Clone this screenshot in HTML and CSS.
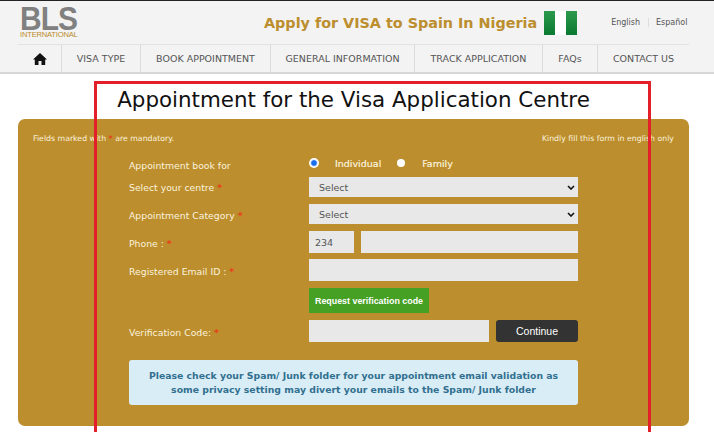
FILE: index.html

```html
<!DOCTYPE html>
<html>
<head>
	<meta charset="UTF-8">
	<title>Appointment for the Visa Application Centre</title>
	<link rel="stylesheet" href="styles.css">
</head>
<body>
	<div class="top">
		<div class="wrap head">
			<div class="logo">
				<div class="logo-name">BLS</div>
				<div class="logo-sub">INTERNATIONAL</div>
			</div>
			<div class="site-title">Apply for VISA to Spain In Nigeria</div>
			<div class="flag"><span></span></div>
			<div class="lang">
				<a class="lang-first">English</a>
				<a>Español</a>
			</div>
		</div>
		<div class="wrap">
			<ul class="nav">
				<li class="nav-home">
					<svg width="14" height="12" viewBox="0 0 14 12"><path d="M7 0 L14 6.4 L12.2 6.4 L12.2 12 L8.5 12 L8.5 8 L5.5 8 L5.5 12 L1.8 12 L1.8 6.4 L0 6.4 Z" fill="#111"/></svg>
				</li>
				<li class="w-visa">VISA TYPE</li>
				<li class="w-book">BOOK APPOINTMENT</li>
				<li class="w-info">GENERAL INFORMATION</li>
				<li class="w-track">TRACK APPLICATION</li>
				<li class="w-faq">FAQs</li>
				<li class="w-contact">CONTACT US</li>
			</ul>
		</div>
	</div>

	<h1 class="title">Appointment for the Visa Application Centre</h1>

	<div class="panel">
		<div class="notes">
			<span>Fields marked with <b class="req">*</b> are mandatory.</span>
			<span>Kindly fill this form in english only</span>
		</div>
		<form class="form">
			<div class="row row-radio">
				<label class="lbl">Appointment book for</label>
				<div class="radios">
					<span class="radio on"></span><span class="radio-text r-ind">Individual</span>
					<span class="radio"></span><span class="radio-text">Family</span>
				</div>
			</div>
			<div class="row row-sel">
				<label class="lbl">Select your centre <b class="req">*</b></label>
				<select class="field"><option>Select</option></select>
			</div>
			<div class="row row-sel">
				<label class="lbl">Appointment Category <b class="req">*</b></label>
				<select class="field"><option>Select</option></select>
			</div>
			<div class="row row-input">
				<label class="lbl">Phone : <b class="req">*</b></label>
				<div class="pair">
					<input class="field code" value="234">
					<input class="field">
				</div>
			</div>
			<div class="row row-input">
				<label class="lbl">Registered Email ID : <b class="req">*</b></label>
				<input class="field">
			</div>
			<div class="row row-btn">
				<span class="lbl"></span>
				<div class="ctrl"><button type="button" class="btn-green">Request verification code</button></div>
			</div>
			<div class="row row-input">
				<label class="lbl">Verification Code: <b class="req">*</b></label>
				<div class="pair">
					<input class="field">
					<button type="button" class="btn-dark">Continue</button>
				</div>
			</div>
			<div class="alert">Please check your Spam/ Junk folder for your appointment email validation as some privacy setting may divert your emails to the Spam/ Junk folder</div>
		</form>
	</div>

	<div class="marker"></div>
</body>
</html>
```

FILE: styles.css

```css
html, body {
	height: 432px;
	overflow: hidden;
}
body {
	margin: 0;
	background: #fff;
	font-family: "DejaVu Sans", Verdana, sans-serif;
	color: #333;
	position: relative;
}

/* header */
.top {
	background: #f3f3f3;
	border-top: 1px solid #222;
	border-bottom: 2px solid #d6d6d6;
	height: 71px;
}
.wrap {
	margin: 0 18px;
	width: 671px;
}
.head {
	display: flex;
	align-items: center;
	height: 43px;
	border-bottom: 1px solid #e2e2e2;
}
.logo {
	width: 246px;
	padding-left: 2px;
	box-sizing: border-box;
}
.logo-name {
	font-family: "Liberation Sans", sans-serif;
	font-weight: bold;
	font-size: 34px;
	line-height: 25px;
	color: #808080;
	letter-spacing: -1px;
	transform: scaleX(0.88);
	transform-origin: left;
}
.logo-sub {
	font-family: "Liberation Sans", sans-serif;
	font-size: 7.6px;
	line-height: 8px;
	color: #bb8c2c;
	letter-spacing: -0.2px;
}
.site-title {
	font-size: 14.35px;
	font-weight: bold;
	color: #bc8e2d;
	white-space: nowrap;
}
.flag {
	width: 33px;
	height: 24px;
	margin-left: 7px;
	background: linear-gradient(#2c9a4d, #0a7a32);
	display: flex;
	justify-content: center;
}
.flag span {
	width: 11px;
	background: #fff;
}
.lang {
	margin-left: 34px;
	font-size: 8px;
	color: #555;
	display: flex;
}
.lang-first {
	border-right: 1px solid #ddd;
	padding-right: 8px;
	margin-right: 7px;
}

.nav {
	list-style: none;
	margin: 0;
	padding: 0;
	display: flex;
	height: 27px;
	font-size: 9.5px;
	color: #555;
}
.nav li {
	display: flex;
	align-items: center;
	justify-content: center;
	border-right: 1px solid #dcdcdc;
	box-sizing: border-box;
}
.nav-home { width: 44px; }
.w-visa { width: 79px; }
.w-book { width: 130px; }
.w-info { width: 144px; }
.w-track { width: 128px; }
.w-faq { width: 55px; }
.nav .w-contact { width: 91px; border-right: 0; }

.title {
	margin: 0;
	height: 45px;
	line-height: 52px;
	text-align: center;
	font-size: 21.4px;
	font-weight: normal;
	color: #111;
	padding-right: 7px;
}

/* form panel */
.panel {
	margin: 0 25px 0 18px;
	height: 307px;
	background: #bc8e2d;
	border-radius: 7px;
	box-sizing: border-box;
	padding: 14px 15px 0 15px;
	color: #fbf3df;
}
.notes {
	display: flex;
	justify-content: space-between;
	font-size: 7.8px;
	line-height: 12px;
}
.req {
	color: #e8401a;
	font-weight: bold;
}
.form {
	margin: 0 96px;
	width: 449px;
}
.row {
	display: flex;
	align-items: center;
	font-size: 9.3px;
}
.lbl {
	width: 180px;
	flex: none;
}
.row-radio {
	height: 20px;
	margin-top: 10px;
}
.radios {
	display: flex;
	align-items: center;
	position: relative;
	top: -2px;
}
.radio {
	width: 8px;
	height: 8px;
	border-radius: 50%;
	background: #fff;
}
.radio.on {
	background: #1a6ff0;
	border: 1px solid #fff;
	box-shadow: 0 0 0 1px #fff;
	box-sizing: border-box;
	margin-left: 1px;
}
.radio-text {
	margin-left: 17px;
	font-size: 9.5px;
	-webkit-text-stroke: 0.2px;
}
.r-ind {
	margin-right: 16px;
}
.field {
	flex: 1;
	min-width: 0;
	width: 100%;
	box-sizing: border-box;
	height: 100%;
	border: 0;
	border-radius: 0;
	background: #e8e8e8;
	font-family: inherit;
	font-size: 9.5px;
	color: #555;
	padding: 0 6px;
	outline: 0;
}
select.field {
	appearance: none;
	padding-left: 10px;
	background-image: url("data:image/svg+xml,%3Csvg xmlns='http://www.w3.org/2000/svg' width='8' height='5'%3E%3Cpath d='M1 1 L4 4 L7 1' fill='none' stroke='%23111' stroke-width='1.6'/%3E%3C/svg%3E");
	background-repeat: no-repeat;
	background-position: right 3px center;
}
.row-sel {
	height: 20px;
	margin-bottom: 7px;
}
.row-radio + .row-sel {
	margin-top: 2px;
}
.row-sel + .row-sel .lbl {
	padding-top: 3px;
}
.row-input {
	height: 22px;
	margin-bottom: 6px;
}
.row-input .lbl {
	padding-top: 2px;
}
.pair {
	flex: 1;
	height: 100%;
	display: flex;
	gap: 7px;
}
.code {
	flex: none;
	width: 45px;
}
.row-btn {
	height: 25px;
	margin-top: 7px;
	margin-bottom: 7px;
}
.btn-green {
	height: 25px;
	width: 120px;
	border: 0;
	background: #45a023;
	color: #fff;
	font-family: "Liberation Sans", sans-serif;
	font-weight: bold;
	font-size: 8.9px;
	padding: 0;
}
.btn-dark {
	flex: none;
	width: 82px;
	height: 22px;
	border: 0;
	border-radius: 3px;
	background: #333;
	color: #fff;
	font-family: "Liberation Sans", sans-serif;
	font-size: 10.5px;
	padding: 0;
}
.alert {
	margin-top: 18px;
	height: 45px;
	box-sizing: border-box;
	padding: 9px 12px 0;
	background: #d9edf7;
	border-radius: 3px;
	color: #31708f;
	font-size: 9.3px;
	line-height: 14px;
	font-weight: bold;
	text-align: center;
}

/* red box drawn over the page */
.marker {
	position: absolute;
	left: 94px;
	top: 81px;
	width: 551px;
	height: 360px;
	border: 3px solid #e3202a;
}
```
